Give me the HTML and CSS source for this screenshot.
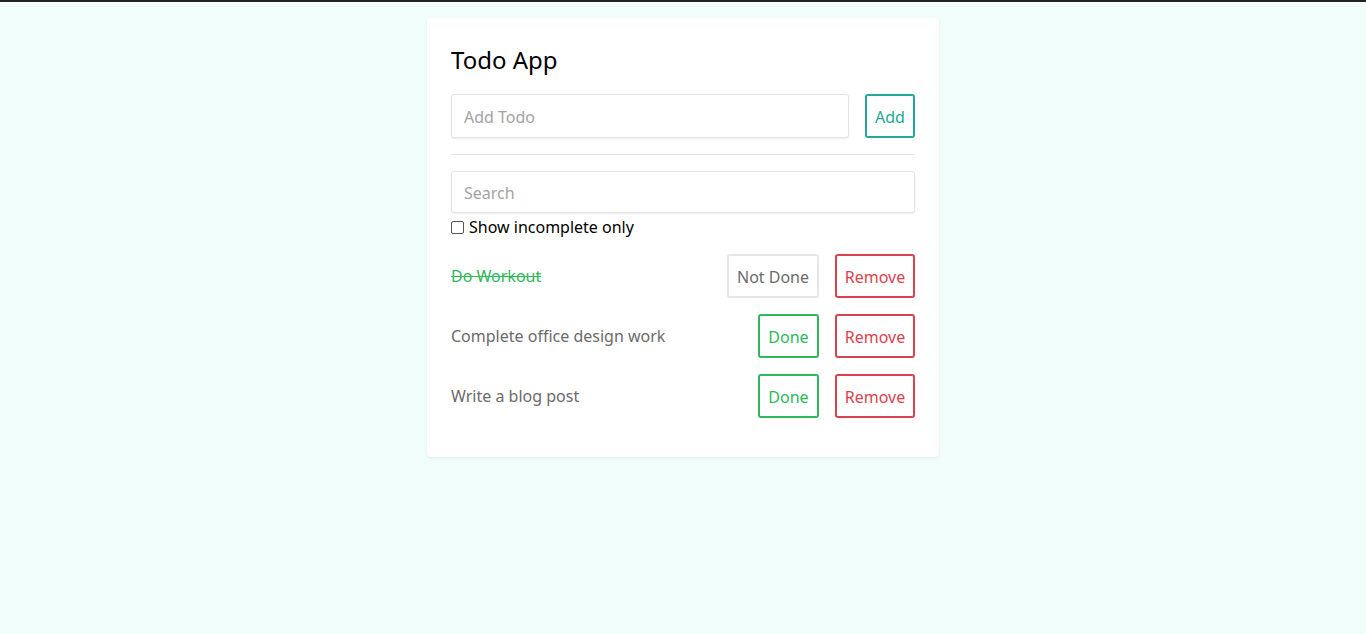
FILE: index.html
```html
<!DOCTYPE html>
<html>
<head>
<meta charset="utf-8">
<link rel="stylesheet" href="styles.css">
</head>
<body>
<div class="topline"></div>
<main class="page">
  <section class="card">
    <h1 class="title">Todo App</h1>
    <div class="add-row">
      <input class="field add-field" type="text" placeholder="Add Todo">
      <button class="btn btn-teal">Add</button>
    </div>
    <hr class="divider">
    <input class="field search-field" type="text" placeholder="Search">
    <label class="check"><span class="box"></span>Show incomplete only</label>
    <ul class="list">
      <li class="item">
        <span class="text done">Do Workout</span>
        <button class="btn btn-gray">Not Done</button>
        <button class="btn btn-red">Remove</button>
      </li>
      <li class="item">
        <span class="text">Complete office design work</span>
        <button class="btn btn-green">Done</button>
        <button class="btn btn-red">Remove</button>
      </li>
      <li class="item">
        <span class="text">Write a blog post</span>
        <button class="btn btn-green">Done</button>
        <button class="btn btn-red">Remove</button>
      </li>
    </ul>
  </section>
</main>
</body>
</html>
```

FILE: styles.css
```css
* { box-sizing: border-box; }
html, body { margin: 0; padding: 0; }
body {
  background: #f0fdfa;
  font-family: "Noto Sans", "Open Sans", sans-serif;
  font-size: 16px;
  color: #000;
  height: 634px;
  overflow: hidden;
}
.topline { height: 2px; background: #222; }
.page { display: flex; justify-content: center; padding-top: 16px; }
.card {
  width: 512px;
  background: #fff;
  border-radius: 4px;
  box-shadow: 0 1px 3px rgba(0,0,0,0.08);
  padding: 24px 24px 39px;
}
.title {
  margin: 0 0 16px;
  font-size: 24px;
  font-weight: 400;
  line-height: 36px;
}
.add-row { display: flex; gap: 16px; }
.field {
  font-family: inherit;
  font-size: 16px;
  border: 1px solid #e4e4e4;
  border-radius: 3px;
  box-shadow: 0 1px 2px rgba(0,0,0,0.08);
  padding: 1px 12px 0;
  color: #333;
  outline: none;
}
.field::placeholder { color: #a3a3a3; }
.add-field { flex: 1; height: 44px; }
.divider { border: 0; border-top: 1px solid #e6e6e6; margin: 16px 0 16px; }
.search-field { display: block; width: 100%; height: 42px; }
.check {
  display: flex; align-items: center; gap: 5px;
  margin-top: 4px; line-height: 20px;
}
.box {
  width: 13px; height: 13px;
  border: 1px solid #555; border-radius: 2px; background: #fff;
}
.list { list-style: none; margin: 17px 0 0; padding: 0; display: flex; flex-direction: column; gap: 16px; }
.item { display: flex; align-items: center; gap: 16px; height: 44px; }
.text { flex: 1; color: #6b6b6b; }
.text.done { color: #2eb85c; text-decoration: line-through; }
.btn {
  font-family: inherit; font-size: 16px;
  height: 44px; padding: 1px 0 0;
  background: #fff;
  border: 2px solid; border-radius: 3px;
  white-space: nowrap;
}
.btn-teal { border-color: #22a897; color: #22a897; width: 50px; }
.btn-gray { border-color: #e6e6e6; color: #6b6b6b; width: 92px; }
.btn-green { border-color: #2eb85c; color: #2eb85c; width: 61px; }
.btn-red { border-color: #d8434d; color: #d8434d; width: 80px; }
```
